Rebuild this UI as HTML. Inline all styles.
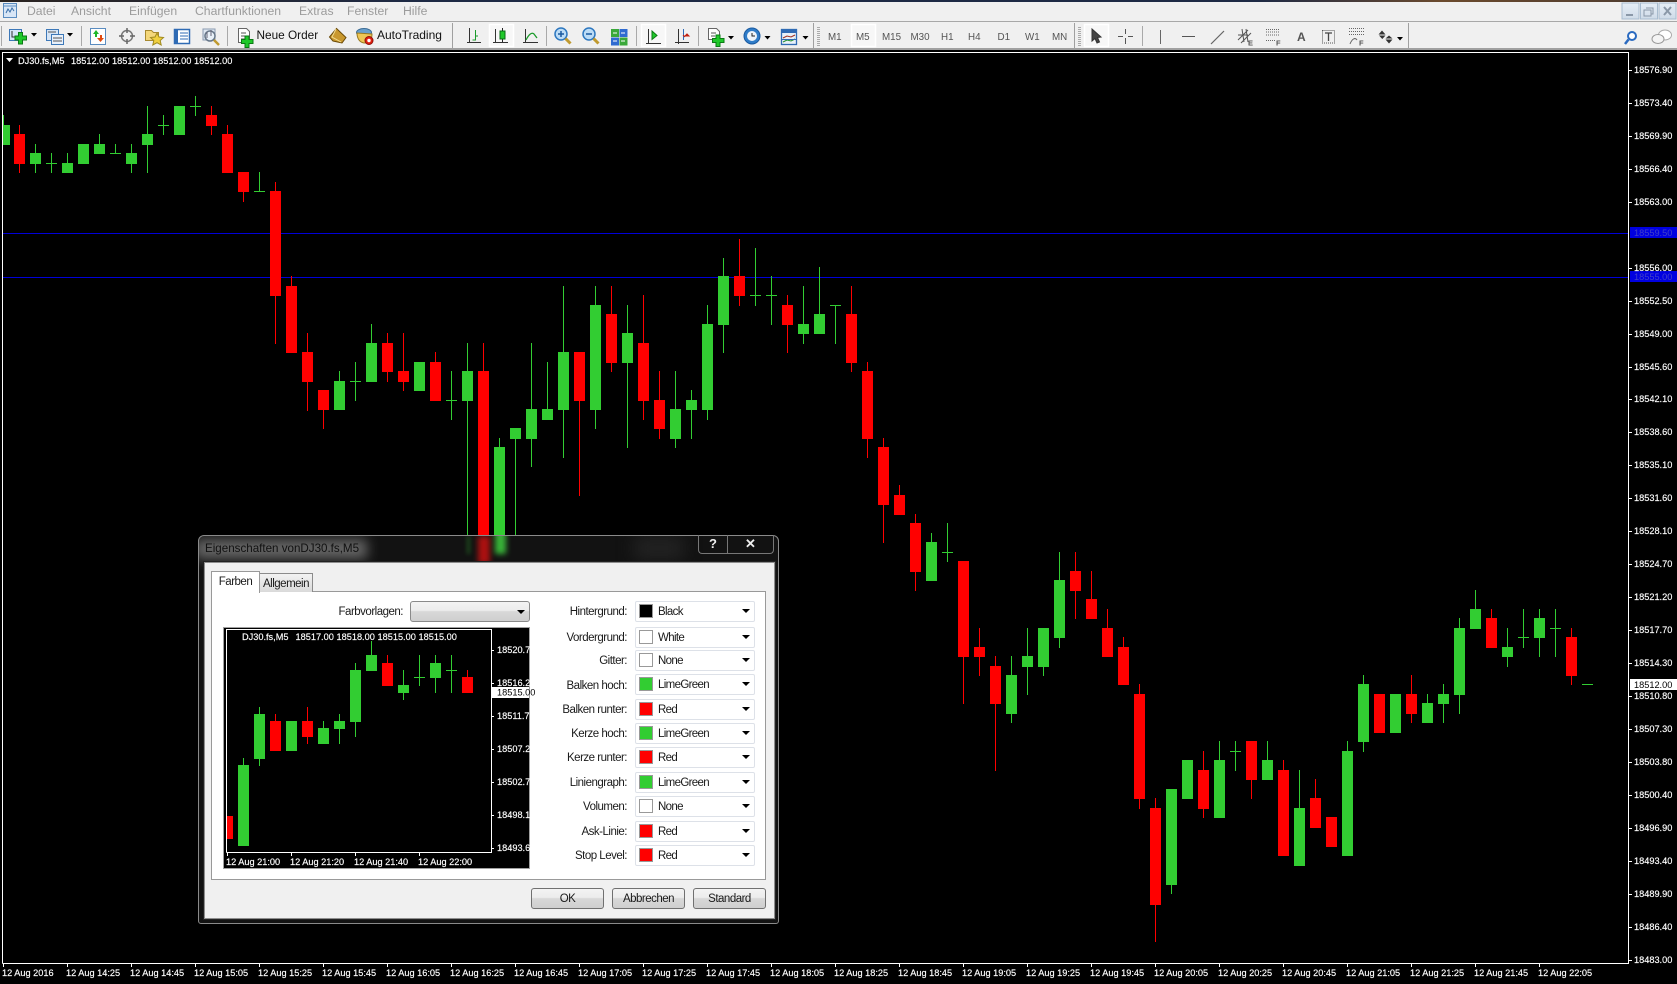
<!DOCTYPE html>
<html><head><meta charset="utf-8"><title>MT4</title>
<style>
html,body{margin:0;padding:0;background:#000;width:1677px;height:984px;overflow:hidden}
body{position:relative;font-family:"Liberation Sans",sans-serif}
svg{position:absolute;display:block}
.a{position:absolute;box-sizing:border-box}
.lb{position:absolute;left:500px;width:127px;text-align:right;font-size:11.5px;letter-spacing:-.5px;line-height:14px;color:#1a1a1a;white-space:nowrap;margin-top:1px}
.cb{position:absolute;left:635px;width:120px;height:21px;box-sizing:border-box;border:1px solid #dde1e8;border-radius:2px;background:#fff;font-size:11.5px;letter-spacing:-.65px;line-height:21px;color:#1a1a1a}
.cb i{position:absolute;left:3px;top:2px;width:14px;height:14px;box-sizing:border-box;border:1px solid #999;background:#fff}
.cb span{position:absolute;left:22px;top:0}
.cb b{position:absolute;left:106px;top:7px;width:0;height:0;border-left:4px solid transparent;border-right:4px solid transparent;border-top:4px solid #000}
.btn{position:absolute;top:888px;width:73px;height:21px;box-sizing:border-box;border:1px solid #707070;border-radius:3px;background:linear-gradient(#f3f3f3,#ececec 45%,#d8d8d8 50%,#cfcfcf);font-size:11.5px;letter-spacing:-.5px;line-height:21px;text-align:center;color:#1a1a1a}
text{font-family:"Liberation Sans",sans-serif}
</style></head>
<body>
<!-- main chart -->
<svg style="left:0;top:0" width="1677" height="984" viewBox="0 0 1677 984">
<rect width="1677" height="984" fill="#000"/>
<g shape-rendering="crispEdges">
<path d="M3 233.5H1629M3 277.5H1629" stroke="#0000d8" stroke-width="1"/>
<path fill="#32cd32" d="M3 125h7V145H3zM30 153h11V164h-11zM62 163h11V173h-11zM78 144h11V164h-11zM94 144h11V154h-11zM126 153h11V164h-11zM142 134h11V145h-11zM174 106h11V135h-11zM334 381h11V410h-11zM366 343h11V382h-11zM414 362h11V391h-11zM462 371h11V401h-11zM494 447h11V560h-11zM510 428h11V439h-11zM526 409h11V439h-11zM542 409h11V420h-11zM558 352h11V410h-11zM590 305h11V410h-11zM622 333h11V363h-11zM670 409h11V439h-11zM686 400h11V410h-11zM702 324h11V410h-11zM718 276h11V325h-11zM798 324h11V334h-11zM814 314h11V334h-11zM926 542h11V581h-11zM1006 675h11V714h-11zM1022 656h11V667h-11zM1038 628h11V667h-11zM1054 580h11V638h-11zM1166 789h11V885h-11zM1182 760h11V799h-11zM1214 760h11V818h-11zM1262 760h11V780h-11zM1294 808h11V866h-11zM1342 751h11V856h-11zM1358 684h11V742h-11zM1390 694h11V733h-11zM1422 703h11V723h-11zM1438 694h11V704h-11zM1454 628h11V695h-11zM1470 609h11V629h-11zM1502 647h11V657h-11zM1534 618h11V638h-11z"/>
<path fill="#f00" d="M14 134h11V164h-11zM206 115h11V126h-11zM222 134h11V173h-11zM238 172h11V192h-11zM270 191h11V296h-11zM286 286h11V353h-11zM302 352h11V382h-11zM318 390h11V410h-11zM382 343h11V372h-11zM398 371h11V382h-11zM430 362h11V401h-11zM478 371h11V560h-11zM574 352h11V401h-11zM606 314h11V363h-11zM638 343h11V401h-11zM654 400h11V429h-11zM734 276h11V296h-11zM782 305h11V325h-11zM846 314h11V363h-11zM862 371h11V439h-11zM878 447h11V505h-11zM894 495h11V515h-11zM910 523h11V572h-11zM958 561h11V657h-11zM974 647h11V657h-11zM990 666h11V704h-11zM1070 571h11V591h-11zM1086 599h11V619h-11zM1102 628h11V657h-11zM1118 647h11V685h-11zM1134 694h11V799h-11zM1150 808h11V905h-11zM1198 770h11V809h-11zM1246 741h11V780h-11zM1278 770h11V856h-11zM1310 798h11V828h-11zM1326 817h11V847h-11zM1374 694h11V733h-11zM1406 694h11V714h-11zM1486 618h11V648h-11zM1566 637h11V676h-11z"/>
<path fill="none" stroke="#32cd32" stroke-width="1" d="M3.5 115V145M35.5 144V173M51.5 153V173M67.5 153V163M99.5 134V144M115.5 144V154M131.5 144V173M147.5 106V173M163.5 115V135M195.5 96V116M259.5 172V192M339.5 371V381M355.5 362V401M371.5 324V343M451.5 371V420M467.5 343V535M499.5 438V447M515.5 439V535M531.5 343V467M547.5 362V409M563.5 286V458M595.5 286V429M627.5 305V448M675.5 371V448M691.5 390V439M707.5 305V420M723.5 258V353M755.5 248V306M771.5 276V325M803.5 286V344M819.5 267V314M835.5 305V344M931.5 533V581M947.5 523V562M1011.5 656V723M1027.5 628V695M1043.5 667V676M1059.5 552V648M1171.5 885V894M1219.5 741V760M1235.5 741V771M1267.5 741V760M1299.5 770V808M1347.5 741V751M1363.5 675V752M1427.5 694V723M1443.5 684V723M1459.5 618V714M1475.5 590V609M1507.5 628V667M1523.5 609V648M1539.5 609V657M1555.5 609V657
M46 163.5h11M110 153.5h11M158 125.5h11M190 106.5h11M254 191.5h11M350 381.5h11M446 400.5h11M750 295.5h11M766 295.5h11M830 305.5h11M942 552.5h11M1230 751.5h11M1518 637.5h11M1550 628.5h11M1582 684.5h11"/>
<path fill="none" stroke="#f00" stroke-width="1" d="M19.5 125V173M211.5 106V135M227.5 125V134M243.5 192V202M275.5 182V344M291.5 276V286M307.5 333V411M323.5 410V429M387.5 333V382M403.5 333V391M435.5 352V362M483.5 343V371M579.5 401V496M611.5 286V372M643.5 295V420M659.5 371V439M739.5 239V306M787.5 295V353M851.5 286V372M867.5 362V458M883.5 438V543M899.5 485V495M915.5 514V591M963.5 657V704M979.5 628V676M995.5 656V771M1075.5 552V619M1091.5 571V599M1107.5 609V628M1123.5 637V647M1139.5 684V809M1155.5 798V942M1203.5 751V818M1251.5 780V799M1283.5 760V770M1315.5 779V798M1411.5 675V723M1491.5 609V618M1571.5 628V685"/>
<!-- frame -->
<path fill="none" stroke="#fff" stroke-width="1" d="M2.5 963.5V52.5H1628.5V963.5H2.5"/>
<path fill="none" stroke="#fff" stroke-width="1" d="M1629 70.5h3M1629 103.5h3M1629 136.5h3M1629 169.5h3M1629 202.5h3M1629 268.5h3M1629 301.5h3M1629 334.5h3M1629 367.5h3M1629 399.5h3M1629 432.5h3M1629 465.5h3M1629 498.5h3M1629 531.5h3M1629 564.5h3M1629 597.5h3M1629 630.5h3M1629 663.5h3M1629 696.5h3M1629 729.5h3M1629 762.5h3M1629 795.5h3M1629 828.5h3M1629 861.5h3M1629 894.5h3M1629 927.5h3M1629 960.5h3
M3.5 963v4M67.5 963v4M131.5 963v4M195.5 963v4M259.5 963v4M323.5 963v4M387.5 963v4M451.5 963v4M515.5 963v4M579.5 963v4M643.5 963v4M707.5 963v4M771.5 963v4M835.5 963v4M899.5 963v4M963.5 963v4M1027.5 963v4M1091.5 963v4M1155.5 963v4M1219.5 963v4M1283.5 963v4M1347.5 963v4M1411.5 963v4M1475.5 963v4M1539.5 963v4"/>
<rect x="1630" y="679" width="47" height="11" fill="#fff"/>
<rect x="1630" y="227" width="47" height="11" fill="#0000e0"/>
<rect x="1630" y="271" width="47" height="11" fill="#0000e0"/>
</g>
<path d="M6 58h7l-3.500 4z" fill="#fff"/>
<g font-size="9.200" fill="#fff" stroke="#fff" stroke-width=".15">
<text x="18" y="64">DJ30.fs,M5</text><text x="71" y="64">18512.00</text><text x="112" y="64">18512.00</text><text x="153" y="64">18512.00</text><text x="194" y="64">18512.00</text>
<text x="1634" y="73">18576.90</text><text x="1634" y="106">18573.40</text><text x="1634" y="139">18569.90</text><text x="1634" y="172">18566.40</text><text x="1634" y="205">18563.00</text><text x="1634" y="271">18556.00</text><text x="1634" y="304">18552.50</text><text x="1634" y="337">18549.00</text><text x="1634" y="370">18545.60</text><text x="1634" y="402">18542.10</text><text x="1634" y="435">18538.60</text><text x="1634" y="468">18535.10</text><text x="1634" y="501">18531.60</text><text x="1634" y="534">18528.10</text><text x="1634" y="567">18524.70</text><text x="1634" y="600">18521.20</text><text x="1634" y="633">18517.70</text><text x="1634" y="666">18514.30</text><text x="1634" y="699">18510.80</text><text x="1634" y="732">18507.30</text><text x="1634" y="765">18503.80</text><text x="1634" y="798">18500.40</text><text x="1634" y="831">18496.90</text><text x="1634" y="864">18493.40</text><text x="1634" y="897">18489.90</text><text x="1634" y="930">18486.40</text><text x="1634" y="963">18483.00</text>
<text x="2" y="976">12 Aug 2016</text><text x="66" y="976">12 Aug 14:25</text><text x="130" y="976">12 Aug 14:45</text><text x="194" y="976">12 Aug 15:05</text><text x="258" y="976">12 Aug 15:25</text><text x="322" y="976">12 Aug 15:45</text><text x="386" y="976">12 Aug 16:05</text><text x="450" y="976">12 Aug 16:25</text><text x="514" y="976">12 Aug 16:45</text><text x="578" y="976">12 Aug 17:05</text><text x="642" y="976">12 Aug 17:25</text><text x="706" y="976">12 Aug 17:45</text><text x="770" y="976">12 Aug 18:05</text><text x="834" y="976">12 Aug 18:25</text><text x="898" y="976">12 Aug 18:45</text><text x="962" y="976">12 Aug 19:05</text><text x="1026" y="976">12 Aug 19:25</text><text x="1090" y="976">12 Aug 19:45</text><text x="1154" y="976">12 Aug 20:05</text><text x="1218" y="976">12 Aug 20:25</text><text x="1282" y="976">12 Aug 20:45</text><text x="1346" y="976">12 Aug 21:05</text><text x="1410" y="976">12 Aug 21:25</text><text x="1474" y="976">12 Aug 21:45</text><text x="1538" y="976">12 Aug 22:05</text>
<text x="1634" y="688" fill="#000" stroke="none">18512.00</text>
<text x="1634" y="236" fill="#4040c8" stroke="none">18559.50</text>
<text x="1634" y="280" fill="#4040c8" stroke="none">18555.00</text>
</g>
</svg>

<!-- toolbars -->
<svg style="left:0;top:0" width="1677" height="50" viewBox="0 0 1677 50">
<defs>
<linearGradient id="top" x1="0" x2="1" y1="0" y2="0"><stop offset="0" stop-color="#2a2320"/><stop offset=".25" stop-color="#1e2a45"/><stop offset=".75" stop-color="#1e2a45"/><stop offset=".86" stop-color="#6b4a2e"/><stop offset="1" stop-color="#4a3a30"/></linearGradient>
<linearGradient id="wb" x1="0" x2="0" y1="0" y2="1"><stop offset="0" stop-color="#e6eef6"/><stop offset="1" stop-color="#cfdbe8"/></linearGradient>
<g id="plus"><path d="M4 .5h4v3.500h4v4H8v4H4V8H.5V4H4z" fill="#1fc82a" stroke="#0a7a14" stroke-width="1"/></g>
<g id="sel"><rect x=".5" y=".5" width="24" height="22" fill="#f7f7f7" stroke="#fff" stroke-width="1.500"/></g>
</defs>
<rect width="1677" height="50" fill="#f0f0f0"/>
<rect width="1677" height="2" fill="url(#top)"/>
<rect y="21" width="1677" height="1" fill="#a8a8a8"/>
<rect y="48" width="1677" height="2" fill="#a0a0a0"/>
<!-- app icon -->
<rect x="3.500" y="3.500" width="13" height="14" fill="#d8e6f6" stroke="#5a8cc0"/><path d="M6 13l2-4 2 3 2-4 2 3" fill="none" stroke="#3a6ea8"/><path d="M4 6h12" stroke="#5a8cc0"/>
<!-- menu -->
<g font-size="12.200" fill="#9c9c9c">
<text x="27" y="15">Datei</text><text x="71" y="15">Ansicht</text><text x="129" y="15">Einfügen</text><text x="195" y="15">Chartfunktionen</text><text x="299" y="15">Extras</text><text x="347" y="15">Fenster</text><text x="403" y="15">Hilfe</text>
</g>
<!-- separators -->
<g shape-rendering="crispEdges">
<path d="M1.500 26V46M81.500 26V46M227.500 26V46M546.500 26V46M636.500 26V46M698.500 26V46M1142.500 26V46" stroke="#a9a9a9"/>
<path d="M452.500 23V48M813.500 23V48M1074.500 23V48M1408.500 23V48" stroke="#a0a0a0"/>
<path d="M818.500 27V46M1079.500 27V46" stroke="#aaa" stroke-width="3" stroke-dasharray="1 1"/>
</g>
<!-- selected buttons -->
<use href="#sel" x="489" y="24"/><use href="#sel" x="641" y="24"/><use href="#sel" x="851" y="24"/><use href="#sel" x="1084" y="24"/>
<!-- new chart -->
<rect x="9.500" y="29.500" width="12" height="11" fill="#d6e5f6" stroke="#3d78b8"/><path d="M12 31v6h5" fill="none" stroke="#333"/><use href="#plus" x="14.500" y="32"/>
<path d="M31 33h6l-3 3.500z"/>
<!-- profiles -->
<rect x="46.500" y="29.500" width="12" height="11" fill="#d6e5f6" stroke="#3d78b8"/><rect x="51.500" y="34.500" width="12" height="10" fill="#e8f0fa" stroke="#3d78b8"/><path d="M48 32h8M53 38h9M53 41h9" stroke="#555" fill="none"/>
<path d="M67 33h6l-3 3.500z"/>
<!-- market watch -->
<rect x="90.500" y="28.500" width="15" height="16" fill="#fff" stroke="#5a8cc0"/><path d="M93 34l3-4 3 4h-2v3h-2v-3z" fill="#1fb82a"/><path d="M97 38h3v-3h2v3h2l-3.500 4z" fill="#e04a10"/>
<!-- crosshair nav -->
<circle cx="127" cy="36" r="5.500" fill="none" stroke="#777" stroke-width="1.500"/><path d="M127 28v5M127 39v5M119 36h5M130 36h5" stroke="#666" stroke-width="1.500"/>
<!-- folder star -->
<path d="M145.500 30.500h6l2 2h5v8h-13z" fill="#f4d77a" stroke="#a88a30"/><path d="M157 33l2 4 4.500 .5-3.300 3 1 4.500-4.200-2.300-4.200 2.300 1-4.500-3.300-3 4.500-.5z" fill="#f0d040" stroke="#a08a20"/>
<!-- terminal -->
<rect x="174.500" y="29.500" width="15" height="14" fill="#fff" stroke="#2f6bb4" stroke-width="1.500"/><rect x="175" y="30" width="3" height="13" fill="#2f6bb4"/><path d="M180 33h8M180 36h8M180 39h8" stroke="#2f6bb4"/>
<!-- tester -->
<rect x="203" y="29" width="12" height="11" fill="#dfe8f2" stroke="#8a9ab0"/><circle cx="210" cy="36" r="5" fill="#e8f0f8" stroke="#68788a" stroke-width="1.500"/><path d="M214 40l5 5" stroke="#c09a30" stroke-width="2.500"/><path d="M207 32v6M211 30v6" stroke="#667"/>
<!-- neue order -->
<path d="M238.500 28.500h8l3 3v11h-11z" fill="#fff" stroke="#666"/><path d="M241 33h5M241 36h6M241 39h4" stroke="#555"/><use href="#plus" x="241" y="35.500"/>
<text x="256.500" y="39" font-size="11.800" fill="#111">Neue Order</text>
<!-- gold -->
<path d="M329.500 37l7-8.500 9.500 9-4 5.500-9-2z" fill="#c9982e" stroke="#6a4a08"/><path d="M336 29l-4 8 9 5" fill="none" stroke="#f3dc90"/>
<!-- autotrading -->
<ellipse cx="364" cy="32.500" rx="7.500" ry="4" fill="#6aa0cc" stroke="#3a6a94"/><path d="M357 33c0 7 4 10 8 10s7-3 7-9z" fill="#eec655" stroke="#9a7a20"/><circle cx="369" cy="40.500" r="4" fill="#e02010" stroke="#901008"/><circle cx="369" cy="40.500" r="1.700" fill="#fff"/>
<text x="377" y="39" font-size="12" fill="#111">AutoTrading</text>
<!-- bar chart -->
<path d="M469.500 28v15M467 42.500h14" stroke="#333" fill="none"/><path d="M475.500 30v10h-3" stroke="#1a9a2a" fill="none"/><path d="M475 36h3" stroke="#1a9a2a"/>
<!-- candles -->
<path d="M495.500 29v14M493 42.500h15" stroke="#333" fill="none"/><path d="M502.500 28v14" stroke="#222"/><rect x="500" y="31" width="5" height="8" fill="#1fc82a" stroke="#0a6a14"/>
<!-- line -->
<path d="M525.500 29v14M523 42.500h15" stroke="#333" fill="none"/><path d="M526 40c3-6 6-8 8-6l3 4" fill="none" stroke="#1a9a2a" stroke-width="1.300"/>
<!-- zoom in -->
<circle cx="561" cy="34" r="6" fill="#bcdcf6" stroke="#2e78c0" stroke-width="1.500"/><path d="M558 34h6M561 31v6" stroke="#1a5aa0" stroke-width="1.500"/><path d="M565.500 38.500l5 5" stroke="#c09a30" stroke-width="3"/>
<!-- zoom out -->
<circle cx="589" cy="34" r="6" fill="#bcdcf6" stroke="#2e78c0" stroke-width="1.500"/><path d="M586 34h6" stroke="#1a5aa0" stroke-width="1.500"/><path d="M593.500 38.500l5 5" stroke="#c09a30" stroke-width="3"/>
<!-- tile -->
<rect x="611" y="29" width="8" height="8" fill="#3aa83a"/><rect x="619.500" y="29" width="8" height="8" fill="#2f6bd0"/><rect x="611" y="37.500" width="8" height="8" fill="#2f6bd0"/><rect x="619.500" y="37.500" width="8" height="8" fill="#3aa83a"/><path d="M613 33h4M621 33h4M613 41h4M621 41h4" stroke="#fff"/>
<!-- autoscroll -->
<path d="M648.500 29v14M646 43.500h15" stroke="#333" fill="none"/><path d="M652 31l5 4.500-5 4z" fill="#1fc82a" stroke="#0a7a14"/>
<!-- shift -->
<path d="M678.500 29v15M675 42.500h14" stroke="#333" fill="none"/><path d="M683.500 29v11" stroke="#2a6ab8"/><path d="M685 36h4l-2-2zm0 1l-2-2" fill="#c02010" stroke="#c02010"/>
<!-- indicators -->
<path d="M708.500 28.500h8l3 3v8h-11z" fill="#fff" stroke="#666"/><path d="M711 33h5M711 36h4" stroke="#555"/><use href="#plus" x="712" y="34.500"/>
<path d="M728 36h6l-3 3.500z"/>
<!-- clock -->
<circle cx="752" cy="36" r="8" fill="#2f7cc8" stroke="#1a5aa0"/><circle cx="752" cy="36" r="5" fill="#eef4fa"/><path d="M752 33v3h3" stroke="#222" fill="none"/>
<path d="M764.500 36h6l-3 3.500z"/>
<!-- templates -->
<rect x="781.500" y="29.500" width="15" height="15" fill="#e8f0f8" stroke="#2f6bb4" stroke-width="1.300"/><rect x="782" y="30" width="14" height="3" fill="#2f6bb4"/><path d="M783 38l4-2 4 1 4-2" stroke="#a03020" fill="none"/><path d="M783 42l4-2 4 1 4-2" stroke="#209030" fill="none"/><path d="M782 39.500h14" stroke="#2f6bb4"/>
<path d="M802.500 36h6l-3 3.500z"/>
<!-- timeframes -->
<g font-size="9.800" fill="#555"><text x="828" y="40">M1</text><text x="856" y="40">M5</text><text x="882" y="40">M15</text><text x="910.500" y="40">M30</text><text x="941" y="40">H1</text><text x="968" y="40">H4</text><text x="997.500" y="40">D1</text><text x="1025" y="40">W1</text><text x="1052" y="40">MN</text></g>
<!-- cursor -->
<path d="M1092 29v12l3-2.500 2 4.500 2.500-1-2-4.500 3.500-.5z" fill="#444" stroke="#333"/>
<!-- crosshair -->
<path d="M1125.500 29v5M1125.500 38v6M1118 36.500h5M1128 36.500h5" stroke="#555"/>
<!-- vline hline trend -->
<path d="M1160.500 30v14" stroke="#666"/><path d="M1182 36.500h13" stroke="#555"/><path d="M1211 44l13-13" stroke="#666" stroke-width="1.200"/>
<!-- channel -->
<path d="M1238 40l10-10M1241 43l10-10M1242 29l2 13M1246 29l2 13M1238 35h10" stroke="#555" fill="none"/><text x="1248" y="45.500" font-size="7.500" font-weight="bold" fill="#555">E</text>
<!-- fibo -->
<path d="M1266 29.500h14M1266 32h14M1266 35h14M1266 40.500h9" stroke="#666" stroke-dasharray="1 1"/><text x="1276" y="45.500" font-size="7.500" font-weight="bold" fill="#555">F</text>
<!-- A, T -->
<text x="1297" y="41" font-size="12" font-weight="bold" fill="#555">A</text>
<rect x="1322.500" y="30.500" width="12" height="12.500" fill="none" stroke="#555" stroke-dasharray="1 1"/><path d="M1325 33h7M1328.500 33v8" stroke="#444" stroke-width="1.300"/>
<!-- fibo F -->
<path d="M1349 28.500h15M1349 31.500h15M1349 34.500h15" stroke="#666" stroke-dasharray="1 1"/><path d="M1350 44c2-5 5-7 7-4" fill="none" stroke="#666"/><text x="1359" y="45.500" font-size="7.500" font-weight="bold" fill="#555">F</text>
<!-- arrows -->
<path d="M1382 30.500l3.500 4h-7zM1379 35.500h6.500l-3.200 3.500zM1385.500 38.500l3.500-3 3.500 3zM1385.500 39.500h7l-3.500 4z" fill="#333"/>
<path d="M1397 37h6l-3 3.500z"/>
<!-- search, chat -->
<circle cx="1632" cy="36" r="4" fill="#fff" stroke="#2a6ac0" stroke-width="2"/><path d="M1628.500 39.500l-3.500 4.500" stroke="#2a6ac0" stroke-width="2.500"/>
<ellipse cx="1665" cy="35" rx="6.500" ry="5" fill="#fff" stroke="#aaa"/><ellipse cx="1658" cy="39" rx="6" ry="4.500" fill="#f4f4f4" stroke="#999"/>
<!-- window btns -->
<g stroke="#a8bccf"><rect x="1622" y="3" width="17" height="16" fill="url(#wb)"/><rect x="1640.500" y="3" width="17" height="16" fill="url(#wb)"/><rect x="1659" y="3" width="17" height="16" fill="url(#wb)"/></g>
<path d="M1626 14h7v2h-7z" fill="#8a98a8"/><path d="M1646 8h7v6h-2M1644 10h7v6h-7z" fill="none" stroke="#8a98a8"/><path d="M1664 7l7 8M1671 7l-7 8" stroke="#8a98a8" stroke-width="2"/>
</svg>

<!-- dialog -->
<div class="a" style="left:198px;top:535px;width:581px;height:389px;background:#121212;border:1px solid #8a8a8a;border-radius:6px 6px 3px 3px;overflow:hidden">
 <div class="a" style="left:-4px;top:3px;width:172px;height:20px;background:#666;filter:blur(6px)"></div>
 <div class="a" style="left:279px;top:0;width:12px;height:28px;background:#e01010;opacity:.75;filter:blur(3px)"></div>
 <div class="a" style="left:296px;top:-6px;width:11px;height:24px;background:#40d040;opacity:.85;filter:blur(3px)"></div>
 <div class="a" style="left:268px;top:0;width:3px;height:18px;background:#2a8a2a;opacity:.5;filter:blur(2px)"></div>
 <div class="a" style="left:435px;top:0;width:50px;height:24px;background:#222;filter:blur(8px)"></div>
</div>
<div class="a" style="left:205px;top:541px;font-size:11.600px;color:#111;line-height:16px;white-space:nowrap">Eigenschaften vonDJ30.fs,M5</div>
<div class="a" style="left:698px;top:535px;width:29px;height:19px;border:1px solid #777;border-top:0;border-right:0;border-radius:0 0 0 4px;color:#eee;font-weight:bold;font-size:13px;text-align:center;line-height:18px">?</div>
<div class="a" style="left:727px;top:535px;width:47px;height:19px;border:1px solid #777;border-top:0;border-radius:0 0 4px 0;color:#eee;font-weight:bold;font-size:13px;text-align:center;line-height:18px">✕</div>
<div class="a" style="left:204px;top:562px;width:571px;height:357px;background:#f0f0f0;border:1px solid #8e8e8e;box-shadow:0 0 0 1px #222"></div>
<!-- tab page -->
<div class="a" style="left:211px;top:591px;width:555px;height:289px;background:#fff;border:1px solid #999"></div>
<div class="a" style="left:259px;top:573px;width:54px;height:19px;border:1px solid #8b8b8b;border-bottom:0;background:linear-gradient(#f2f2f2,#dadada);font-size:11.500px;letter-spacing:-.5px;line-height:20px;text-align:center;color:#1a1a1a">Allgemein</div>
<div class="a" style="left:211px;top:571px;width:49px;height:22px;border:1px solid #999;border-bottom:0;background:#fff;font-size:11.500px;letter-spacing:-.5px;line-height:20px;text-align:center;color:#1a1a1a">Farben</div>
<!-- Farbvorlagen -->
<div class="lb" style="left:300px;width:103px;top:604px">Farbvorlagen:</div>
<div class="a" style="left:410px;top:601px;width:120px;height:21px;border:1px solid #8a8a8a;border-radius:3px;background:linear-gradient(#f3f3f3,#ececec 45%,#d8d8d8 50%,#cfcfcf)"><b style="position:absolute;left:106px;top:8px;width:0;height:0;border-left:4px solid transparent;border-right:4px solid transparent;border-top:4px solid #000"></b></div>
<!-- preview -->
<svg style="left:223px;top:627px" width="312" height="242" viewBox="223 627 312 242">
<g shape-rendering="crispEdges">
<rect x="223.500" y="627.500" width="306" height="241" fill="#000" stroke="#a0a0a0"/>
<path fill="#32cd32" d="M238 765h11V846h-11zM254 714h11V759h-11zM286 721h11V751h-11zM318 728h11V744h-11zM334 721h11V729h-11zM350 670h11V722h-11zM366 655h11V671h-11zM398 685h11V693h-11zM430 663h11V678h-11z"/>
<path fill="#f00" d="M227 816h6V839h-6zM270 721h11V751h-11zM302 721h11V737h-11zM382 663h11V686h-11zM462 677h11V693h-11z"/>
<path fill="none" stroke="#32cd32" d="M243.500 758V765M259.500 707V766M323.500 721V728M339.500 714V744M355.500 663V737M371.500 641V655M403.500 670V700M419.500 655V686M435.500 655V693M451.500 655V693M414 677.500h11M446 670.500h11"/>
<path fill="none" stroke="#f00" d="M275.500 714V721M307.500 707V744M387.500 655V663M467.500 670V677"/>
<path fill="none" stroke="#fff" d="M226.500 852.500V629.500H491.500V852.500H226.500M491 650.500h3M491 683.500h3M491 716.500h3M491 749.500h3M491 782.500h3M491 815.500h3M491 848.500h3M227.500 852v4M291.500 852v4M355.500 852v4M419.500 852v4"/>
<rect x="491" y="687" width="38" height="11" fill="#fff"/>
</g>
<g font-size="9.200" fill="#fff" stroke="#fff" stroke-width=".15">
<text x="242" y="640">DJ30.fs,M5</text><text x="295.500" y="640">18517.00</text><text x="336.500" y="640">18518.00</text><text x="377.500" y="640">18515.00</text><text x="418.500" y="640">18515.00</text>
<text x="497" y="653">18520.7</text><text x="497" y="686">18516.2</text><text x="497" y="719">18511.7</text><text x="497" y="752">18507.2</text><text x="497" y="785">18502.7</text><text x="497" y="818">18498.1</text><text x="497" y="851">18493.6</text>
<text x="226" y="865">12 Aug 21:00</text><text x="290" y="865">12 Aug 21:20</text><text x="354" y="865">12 Aug 21:40</text><text x="418" y="865">12 Aug 22:00</text>
<text x="497" y="695.500" fill="#000" stroke="none">18515.00</text>
</g>
</svg>
<!-- rows -->
<div class="lb" style="top:604px">Hintergrund:</div><div class="cb" style="top:601px"><i style="background:#000"></i><span>Black</span><b></b></div>
<div class="lb" style="top:630px">Vordergrund:</div><div class="cb" style="top:627px"><i></i><span>White</span><b></b></div>
<div class="lb" style="top:653px">Gitter:</div><div class="cb" style="top:650px"><i></i><span>None</span><b></b></div>
<div class="lb" style="top:678px">Balken hoch:</div><div class="cb" style="top:674px"><i style="background:#32cd32"></i><span>LimeGreen</span><b></b></div>
<div class="lb" style="top:702px">Balken runter:</div><div class="cb" style="top:699px"><i style="background:#f00"></i><span>Red</span><b></b></div>
<div class="lb" style="top:726px">Kerze hoch:</div><div class="cb" style="top:723px"><i style="background:#32cd32"></i><span>LimeGreen</span><b></b></div>
<div class="lb" style="top:750px">Kerze runter:</div><div class="cb" style="top:747px"><i style="background:#f00"></i><span>Red</span><b></b></div>
<div class="lb" style="top:775px">Liniengraph:</div><div class="cb" style="top:772px"><i style="background:#32cd32"></i><span>LimeGreen</span><b></b></div>
<div class="lb" style="top:799px">Volumen:</div><div class="cb" style="top:796px"><i></i><span>None</span><b></b></div>
<div class="lb" style="top:824px">Ask-Linie:</div><div class="cb" style="top:821px"><i style="background:#f00"></i><span>Red</span><b></b></div>
<div class="lb" style="top:848px">Stop Level:</div><div class="cb" style="top:845px"><i style="background:#f00"></i><span>Red</span><b></b></div>
<!-- buttons -->
<div class="btn" style="left:531px">OK</div>
<div class="btn" style="left:612px">Abbrechen</div>
<div class="btn" style="left:693px">Standard</div>
</body></html>
